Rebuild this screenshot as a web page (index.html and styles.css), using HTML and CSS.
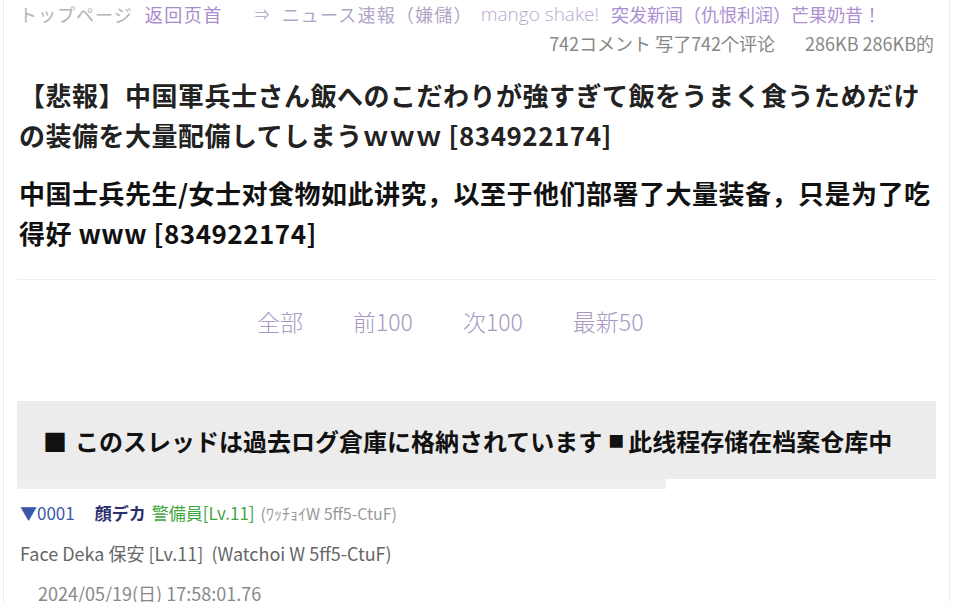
FILE: index.html
```html
<!DOCTYPE html>
<html lang="ja">
<head>
    <meta charset="UTF-8">
    <title>ニュース速報（嫌儲）</title>
    <link rel="stylesheet" href="styles.css">
</head>
<body>
    <div class="page">
        <!-- Navegación superior -->
        <nav class="topnav">
            <a class="nav-top">トップページ</a>
            <a class="nav-back">返回页首</a>
            <span class="nav-arrow">⇒</span>
            <a class="nav-board">ニュース速報（嫌儲）</a>
            <a class="nav-mango">mango shake!</a>
            <a class="nav-zh">突发新闻（仇恨利润）芒果奶昔！</a>
        </nav>

        <div class="meta">
            <span>742コメント 写了742个评论</span>
            <span>286KB 286KB的</span>
        </div>

        <h1 class="title">【悲報】中国軍兵士さん飯へのこだわりが強すぎて飯をうまく食うためだけの装備を大量配備してしまうｗｗｗ [834922174]</h1>
        <h2 class="title-zh">中国士兵先生/女士对食物如此讲究，以至于他们部署了大量装备，只是为了吃得好 www [834922174]</h2>

        <div class="pager">
            <a>全部</a>
            <a>前100</a>
            <a>次100</a>
            <a>最新50</a>
        </div>

        <div class="archived">
            <span class="sq">■</span> このスレッドは過去ログ倉庫に格納されています <span class="sq-small">■</span> 此线程存储在档案仓库中
        </div>
        <div class="archived-tail"></div>

        <!-- Primer comentario -->
        <div class="post">
            <div class="post-head">
                <span class="post-num">▼0001</span>
                <span class="post-name">顔デカ</span>
                <span class="post-rank">警備員[Lv.11]</span>
                <span class="post-id">(ﾜｯﾁｮｲW 5ff5-CtuF)</span>
            </div>
            <div class="post-trans">Face Deka 保安 [Lv.11] &nbsp;(Watchoi W 5ff5-CtuF)</div>
            <div class="post-date">2024/05/19(日) 17:58:01.76</div>
        </div>
    </div>
</body>
</html>
```

FILE: styles.css
```css
* {
    margin: 0;
    padding: 0;
    box-sizing: border-box;
}

body {
    background-color: #ffffff;
    font-family: "Noto Sans CJK JP", "Noto Sans", sans-serif;
    color: #222;
}

.page {
    margin: 0 3px;
    min-height: 602px;
    border-left: 1px solid #ececec;
    border-right: 1px solid #ececec;
    padding: 0 13px 0 13px;
}

/* Navegación */
.topnav {
    display: flex;
    align-items: center;
    font-size: 18px;
    line-height: 28px;
    padding-left: 2px;
    white-space: nowrap;
}

.topnav a, .topnav span {
    margin-right: 12px;
}

.nav-top { color: #b4b4b4; letter-spacing: 1px; }
.nav-back { color: #a98ccc; letter-spacing: 1.5px; }
.nav-arrow { color: #b8b0c4; margin: 0 34px 0 20px; font-size: 15px; }
.nav-board { color: #b3a6c8; letter-spacing: 1.2px; margin-right: 8px !important; }
.nav-mango { color: #b9a9cf; font-family: "Open Sans", sans-serif; font-weight: 300; font-size: 19px; }
.nav-zh { color: #ad8fd2; }

.meta {
    display: flex;
    justify-content: flex-end;
    gap: 30px;
    font-size: 18px;
    line-height: 24px;
    color: #888;
    margin-top: 3px;
    padding-right: 2px;
}

/* Títulos */
.title {
    font-size: 26px;
    letter-spacing: 0.5px;
    line-height: 40px;
    font-weight: 700;
    color: #222;
    margin-top: 20px;
    padding-left: 2px;
}

.title-zh {
    font-family: "Noto Sans CJK SC", sans-serif;
    font-size: 26px;
    letter-spacing: 0.5px;
    line-height: 40px;
    font-weight: 700;
    color: #111;
    margin-top: 18px;
    padding-left: 2px;
    padding-bottom: 26px;
    border-bottom: 1px solid #eeeeee;
}

/* Paginación */
.pager {
    display: flex;
    gap: 50px;
    padding: 26px 0 0 240px;
    height: 121px;
    font-size: 23px;
    line-height: 30px;
}

.pager a {
    color: #a898c2;
    font-weight: 300;
}

/* Aviso de archivo */
.archived {
    background-color: #ececec;
    height: 78px;
    display: flex;
    align-items: center;
    padding-left: 26px;
    font-size: 24px;
    font-weight: 700;
    color: #111;
    white-space: nowrap;
}

.archived .sq {
    margin-right: 8px;
}

.archived .sq-small {
    font-size: 16px;
    margin: 0 4px 0 6px;
}

.archived-tail {
    width: 649px;
    height: 10px;
    background-color: #efefef;
}

/* Comentario */
.post {
    padding: 10px 0 0 3px;
}

.post-head {
    font-size: 17px;
    line-height: 28px;
    display: flex;
    align-items: baseline;
    gap: 6px;
}

.post-num {
    color: #3a57a8;
    margin-right: 14px;
}

.post-name {
    color: #2c2f6a;
    font-weight: 700;
    font-size: 17px;
}

.post-rank {
    color: #3fa53f;
    font-size: 17px;
}

.post-id {
    color: #999;
    font-size: 16px;
}

.post-trans {
    color: #666;
    font-size: 18px;
    line-height: 28px;
    margin-top: 12px;
}

.post-date {
    color: #888;
    font-size: 18px;
    line-height: 28px;
    margin-top: 12px;
    padding-left: 18px;
}
```
